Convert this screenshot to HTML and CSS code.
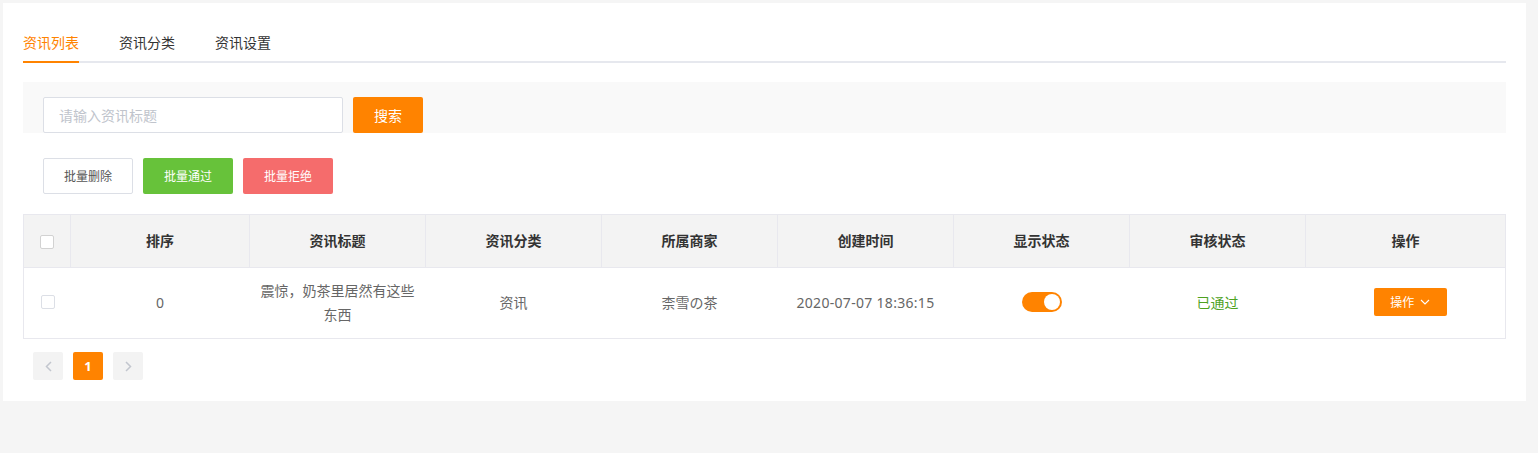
FILE: index.html
```html
<!DOCTYPE html>
<html lang="zh-CN">
<head>
    <meta charset="UTF-8">
    <title>资讯列表</title>
    <link rel="stylesheet" href="styles.css">
</head>
<body>

    <div class="card">

        <!-- 选项卡 -->
        <ul class="tabs">
            <li class="tab active">资讯列表</li>
            <li class="tab">资讯分类</li>
            <li class="tab">资讯设置</li>
        </ul>

        <!-- 搜索 -->
        <div class="search-bar">
            <input type="text" class="search-input" placeholder="请输入资讯标题">
            <button class="btn btn-orange">搜索</button>
        </div>

        <!-- 批量操作 -->
        <div class="batch">
            <button class="btn btn-small btn-default">批量删除</button>
            <button class="btn btn-small btn-green">批量通过</button>
            <button class="btn btn-small btn-red">批量拒绝</button>
        </div>

        <table class="table">
            <colgroup>
                <col style="width: 47px">
                <col style="width: 179px">
                <col style="width: 176px">
                <col style="width: 176px">
                <col style="width: 176px">
                <col style="width: 176px">
                <col style="width: 176px">
                <col style="width: 176px">
                <col>
            </colgroup>
            <thead>
                <tr>
                    <th><span class="checkbox"></span></th>
                    <th>排序</th>
                    <th>资讯标题</th>
                    <th>资讯分类</th>
                    <th>所属商家</th>
                    <th>创建时间</th>
                    <th>显示状态</th>
                    <th>审核状态</th>
                    <th>操作</th>
                </tr>
            </thead>
            <tbody>
                <tr>
                    <td><span class="checkbox light"></span></td>
                    <td>0</td>
                    <td class="title-cell">震惊，奶茶里居然有这些东西</td>
                    <td>资讯</td>
                    <td>柰雪の茶</td>
                    <td class="num">2020-07-07 18:36:15</td>
                    <td><span class="switch"><span class="knob"></span></span></td>
                    <td class="passed">已通过</td>
                    <td>
                        <button class="btn btn-op">操作
                            <svg width="10" height="6" viewBox="0 0 10 6"><path d="M1 1 L5 5 L9 1" fill="none" stroke="#fff" stroke-width="1.1"/></svg>
                        </button>
                    </td>
                </tr>
            </tbody>
        </table>

        <!-- 分页 -->
        <div class="pager">
            <span class="page disabled">
                <svg width="7" height="11" viewBox="0 0 7 11"><path d="M6 1 L1.5 5.5 L6 10" fill="none" stroke="#c2c6ce" stroke-width="1.5"/></svg>
            </span>
            <span class="page current">1</span>
            <span class="page disabled">
                <svg width="7" height="11" viewBox="0 0 7 11"><path d="M1 1 L5.5 5.5 L1 10" fill="none" stroke="#c2c6ce" stroke-width="1.5"/></svg>
            </span>
        </div>

    </div>

</body>
</html>
```

FILE: styles.css
```css
body {
    margin: 0;
    padding: 3px;
    background-color: #f5f5f5;
    font-family: "Noto Sans", "Noto Sans CJK SC", sans-serif;
    font-size: 14px;
    color: #333;
}
.card {
    width: 1523px;
    box-sizing: border-box;
    background: #fff;
    padding: 20px 20px 21px;
}
.tabs {
    list-style: none;
    margin: 0;
    padding: 0;
    display: flex;
    gap: 40px;
    height: 38px;
    border-bottom: 2px solid #e6e8ee;
}
.tab {
    line-height: 40px;
    height: 38px;
    color: #333;
}
.tab.active {
    color: #ff8300;
    border-bottom: 2px solid #ff8300;
}
.search-bar {
    margin-top: 19px;
    background: #f9f9f9;
    padding: 15px 20px 0;
    display: flex;
    gap: 10px;
}
.search-input {
    width: 300px;
    height: 36px;
    box-sizing: border-box;
    border: 1px solid #dcdfe6;
    border-radius: 2px;
    padding: 0 15px;
    font-family: inherit;
    font-size: 14px;
    outline: none;
}
.search-input::placeholder {
    color: #c0c4cc;
}
.btn {
    border: none;
    border-radius: 2px;
    font-family: inherit;
    cursor: pointer;
    padding: 0;
}
.btn-orange {
    width: 70px;
    height: 36px;
    background: #ff8300;
    color: #fff;
    font-size: 14px;
}
.batch {
    margin-top: 25px;
    padding-left: 20px;
    display: flex;
    gap: 10px;
}
.btn-small {
    width: 90px;
    height: 36px;
    font-size: 12px;
    color: #fff;
}
.btn-default {
    background: #fff;
    color: #555;
    border: 1px solid #dcdfe6;
}
.btn-green {
    background: #67c23a;
}
.btn-red {
    background: #f56c6c;
}
.table {
    margin-top: 20px;
    width: 100%;
    table-layout: fixed;
    border-collapse: collapse;
    border: 1px solid #e8e8ee;
}
.table th {
    background: #f3f3f3;
    font-weight: bold;
    color: #333;
    font-size: 14px;
    line-height: 22px;
    padding: 15px 10px;
    border-left: 1px solid #e8e8ee;
    border-bottom: 1px solid #e8e8ee;
    text-align: center;
}
.table th:first-child {
    border-left: none;
}
.table td {
    text-align: center;
    color: #666;
    font-size: 14px;
    line-height: 24px;
    padding: 11px 10px;
}
.table th:first-child,
.table td:first-child {
    text-align: left;
    padding-left: 16px;
}
.title-cell {
    word-break: break-all;
}
.num {
    letter-spacing: 0.3px;
}
.checkbox {
    display: inline-block;
    width: 12px;
    height: 12px;
    border: 1px solid #d2d2d2;
    border-radius: 2px;
    background: #fff;
    vertical-align: middle;
}
.checkbox.light {
    border-color: #dcdfe6;
    margin-left: 1px;
    margin-bottom: 4px;
}
.switch {
    display: inline-block;
    width: 40px;
    height: 20px;
    border-radius: 10px;
    background: #ff8300;
    position: relative;
    vertical-align: middle;
    margin-bottom: 3px;
}
.knob {
    position: absolute;
    right: 2px;
    top: 2px;
    width: 16px;
    height: 16px;
    border-radius: 50%;
    background: #fff;
}
.passed {
    color: #4ea21f !important;
}
.btn-op {
    width: 73px;
    height: 28px;
    margin-left: 10px;
    background: #ff8300;
    color: #fff;
    font-size: 12px;
    display: inline-flex;
    align-items: center;
    justify-content: center;
    gap: 6px;
    vertical-align: middle;
    margin-bottom: 3px;
}
.pager {
    margin-top: 13px;
    padding-left: 10px;
    display: flex;
    gap: 10px;
}
.page {
    width: 30px;
    height: 28px;
    border-radius: 2px;
    background: #f3f3f3;
    display: flex;
    align-items: center;
    justify-content: center;
    font-size: 13px;
    font-weight: bold;
}
.page.current {
    background: #ff8300;
    color: #fff;
}
```
